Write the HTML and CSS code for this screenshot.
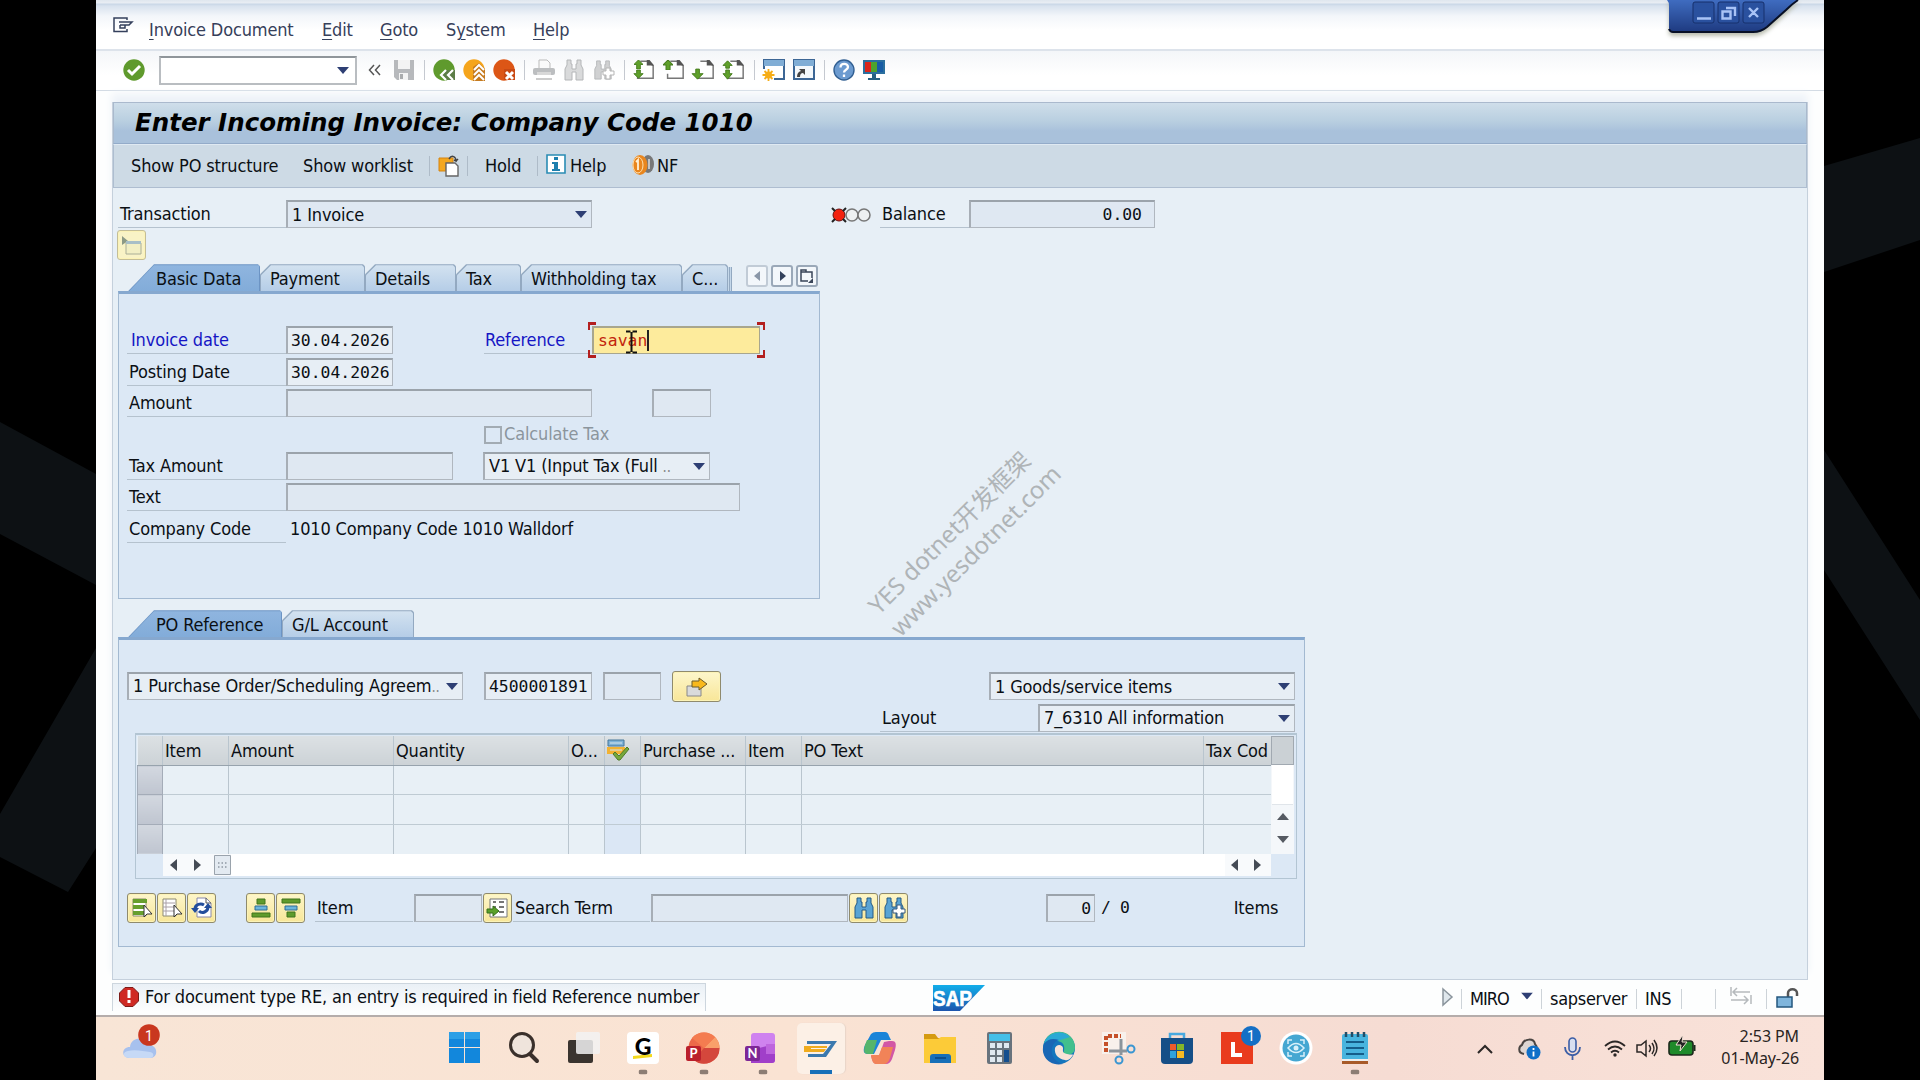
FILE: index.html
```html
<!DOCTYPE html>
<html lang="en">
<head>
<meta charset="utf-8">
<title>Enter Incoming Invoice: Company Code 1010</title>
<link rel="stylesheet" href="styles.css">
</head>
<body>
<svg class="defs" width="0" height="0" aria-hidden="true">
  <symbol id="binoculars" viewBox="0 0 22 22"><path d="M4 1h4v4h1v5h4V5h1V1h4v5l2 4v11h-7v-8H9v8H2V10l2-4z"/></symbol>
  <symbol id="page" viewBox="0 0 24 22"><path d="M8 1.500h9l5 5V20H5v-5" fill="#fff" stroke="#777" stroke-width="1.600"/><path d="M15 0h3l5 6h-8z" fill="#555"/></symbol>
  <symbol id="up" viewBox="0 0 10 10"><path d="M5 0l5 5H7v5H3V5H0z"/></symbol>
  <symbol id="caret" viewBox="0 0 12 7"><path d="M0 0h12L6 7z" fill="#2e3f74"/></symbol>
  <symbol id="dot" viewBox="0 0 9 5"><rect width="9" height="5" rx="2.500" fill="#8c7d74"/></symbol>
  <linearGradient id="sapblue" x2="0" y2="1"><stop stop-color="#12aeea"/><stop offset="1" stop-color="#1d55ad"/></linearGradient>
</svg>
<svg class="backdrop" viewBox="0 0 1920 1080" aria-hidden="true"><g fill="#0d1114"><path d="M0 422l96 52v111L0 534zM96 648L0 814v43l68 35 28-44z"/><path d="M1824 166l96-28v102l-96 32zM1824 450l96 150v120l-96-150z"/></g></svg>

<div class="window">
  <nav class="menubar">
    <svg class="menu-icon" width="21" height="16" viewBox="0 0 21 16"><path d="M14 12v2.500H1V1h13v2M6 5h13l-3 3h-4v3H7V8M7 8h8" fill="none" stroke="#34405c" stroke-width="1.500"/></svg>
    <span class="m-doc"><u>I</u>nvoice Document</span><span class="m-edit"><u>E</u>dit</span><span class="m-goto"><u>G</u>oto</span><span class="m-sys">S<u>y</u>stem</span><span><u>H</u>elp</span>
  </nav>
  <div class="toolbar">
    <svg class="ic ok" viewBox="0 0 22 22"><circle cx="11" cy="11" r="10.700" fill="#5f9a2d"/><path d="M5 11l4 4 8-8" fill="none" stroke="#fff" stroke-width="3"/></svg>
    <div class="command"><svg width="12" height="7"><use href="#caret"/></svg></div>
    <svg class="chev" width="14" height="12" viewBox="0 0 14 12"><path d="M6 1L1.500 6 6 11M12 1L7.500 6l4.500 5" fill="none" stroke="#555" stroke-width="1.500"/></svg>
    <svg class="ic" viewBox="0 0 22 22"><path d="M1 1h20v20H4l-3-3z" fill="#b7b9bc"/><path d="M5 1h12v9H5zM6 14h9v7H6z" fill="#f3f3f3"/><path d="M7 15h3v5H7z" fill="#a9abad"/></svg>
    <i class="sep"></i>
    <svg class="ic" viewBox="0 0 22 22"><circle cx="11" cy="11" r="10.700" fill="#5f9a2d"/><path d="M13 11h9v10h-9l-5-5z" fill="#5c7d46"/><path d="M13 11l-5 5 5 5M20 11l-5 5 5 5" fill="none" stroke="#fff" stroke-width="2.200"/></svg>
    <svg class="ic" viewBox="0 0 22 22"><circle cx="11" cy="11" r="10.700" fill="#f5a51c"/><path d="M10 8l6-4 6 6v12H10z" fill="#c57a1e"/><path d="M11 11l5-5 5 5M11 16l5-5 5 5M11 21l5-5 5 5" fill="none" stroke="#fff" stroke-width="2"/></svg>
    <svg class="ic" viewBox="0 0 22 22"><circle cx="11" cy="11" r="10.700" fill="#dc5616"/><path d="M11 10h11v11H11z" fill="#c94a14"/><path d="M13 13l7 7M20 13l-7 7" stroke="#fff" stroke-width="3"/></svg>
    <i class="sep"></i>
    <svg class="ic" viewBox="0 0 22 22"><path d="M6 10V1h8l3 3v6" fill="#fafafa" stroke="#bbb"/><rect y="9" width="22" height="7" rx="2" fill="#bcbec0"/><path d="M4 13h14v3H4z" fill="#d8d8d8"/><path d="M3 19h16v2H3z" fill="#ccc"/></svg>
    <svg class="ic" viewBox="0 0 22 22"><use href="#binoculars" width="22" height="22" fill="#d9dadb" stroke="#b4b6b8"/></svg>
    <svg class="ic" viewBox="0 0 22 22"><use href="#binoculars" width="20" height="22" fill="#d0d1d2" stroke="#b4b6b8"/><path d="M13 9h4v3h4v4h-4v4h-4v-4h-3v-4h3z" fill="#fff" stroke="#b5b5b5"/></svg>
    <i class="sep"></i>
    <svg class="ic" viewBox="0 0 24 22"><use href="#page" width="24" height="22"/><g fill="#5fa02a" stroke="#447b1d" stroke-width="1"><use href="#up" x="1" width="10" height="10"/><path d="M4 11h4v4h3l-5 5-5-5h3z"/></g></svg>
    <svg class="ic" viewBox="0 0 24 22"><use href="#page" width="24" height="22"/><g fill="#5fa02a" stroke="#447b1d" stroke-width="1"><use href="#up" width="11" height="11"/></g></svg>
    <svg class="ic" viewBox="0 0 24 22"><use href="#page" width="24" height="22"/><path d="M3 10h4v5h4l-6 6-6-6h4z" fill="#5fa02a" stroke="#447b1d"/></svg>
    <svg class="ic" viewBox="0 0 24 22"><use href="#page" width="24" height="22"/><g fill="#5fa02a" stroke="#447b1d" stroke-width="1"><path d="M5 1l5 5H7v3H3V6H0zM3 11h4v4h3l-5 6-5-6h3z"/></g></svg>
    <i class="sep"></i>
    <svg class="ic" viewBox="0 0 22 22"><path d="M1 1h20v19H1z" fill="#fff" stroke="#3c6695" stroke-width="2"/><path d="M1 1h20v6H1z" fill="#80add5"/><path d="M-1 10h12v11H-1z" fill="#fff"/><circle cx="5.500" cy="16" r="3.500" fill="#f6ad16"/><path d="M5.500 10v12M-.5 16h12M1.500 12l8 8M9.500 12l-8 8" stroke="#f6ad16" stroke-width="1.800"/></svg>
    <svg class="ic" viewBox="0 0 22 22"><path d="M1 1h20v19H1z" fill="#f4f8fb" stroke="#3c6695" stroke-width="2"/><path d="M1 1h20v6H1z" fill="#80add5"/><path d="M4 18q0-5 4-6l-2-2h6v6l-2-2q-3 0-3 4z" fill="#444"/></svg>
    <i class="sep"></i>
    <svg class="ic" viewBox="0 0 22 22"><circle cx="11" cy="11" r="10" fill="#6c9bd0" stroke="#315f92" stroke-width="1.400"/><path d="M7.500 8.500c0-5 7.500-4.500 7.500-.5 0 3-4 2.500-4 5.500M11 15.500v2.500" fill="none" stroke="#fff" stroke-width="2.300"/></svg>
    <svg class="ic" viewBox="0 0 22 22"><path d="M0 1h22v14H0z" fill="#2b6f9e"/><path d="M2 3h6v10H2z" fill="#d9251c"/><path d="M8 3h6v10H8z" fill="#4ea32c"/><path d="M14 3h6v10h-6z" fill="#185ca5"/><path d="M9 15h4v4h4v2H5v-2h4z" fill="#246083"/></svg>
  </div>

  <main class="screen">
    <h1>Enter Incoming Invoice: Company Code 1010</h1>
    <div class="appbar">
      <span class="a-po">Show PO structure</span><span class="a-work">Show worklist</span><i class="asep"></i>
      <svg class="a-paste" width="21" height="22" viewBox="0 0 21 22"><path d="M1 3h14v5H8v8H1z" fill="#f4a71f" stroke="#d58411"/><path d="M8 8h9l3 3v10H8z" fill="#fff" stroke="#666" stroke-width="1.400"/><path d="M11 4c3-5 7-2 7 2l-2-1m2 1l2-2" fill="none" stroke="#444" stroke-width="1.500"/></svg>
      <i class="asep"></i><span class="a-hold">Hold</span><i class="asep"></i>
      <svg class="a-info" width="20" height="20" viewBox="0 0 20 20"><path d="M1 1h18v18H1z" fill="#fff" stroke="#2a8cb4" stroke-width="1.600"/><path d="M8 3h4v3H8zM6 8h6v7h2v2H6v-2h2v-5H6z" fill="#1d7fae"/></svg>
      <span class="a-help">Help</span>
      <svg class="a-coins" width="22" height="22" viewBox="0 0 22 22"><ellipse cx="16" cy="10" rx="6" ry="9" fill="#777"/><path d="M17 5v10" stroke="#ddd" stroke-width="1.500"/><ellipse cx="8" cy="11" rx="7.500" ry="10" fill="#e9861e"/><ellipse cx="6" cy="11" rx="5" ry="8" fill="none" stroke="#ffe1b0"/><path d="M4 8l2-2v10" fill="none" stroke="#fff1d8" stroke-width="1.800"/></svg>
      <span>NF</span>
    </div>

    <div class="head-row">
      <span class="label lb-trans">Transaction</span>
      <div class="field select w-long"><span>1 Invoice</span><svg width="12" height="7"><use href="#caret"/></svg></div>
      <svg class="lights" width="39" height="16" viewBox="0 0 39 16"><circle cx="7" cy="8" r="6" fill="#f2210f" stroke="#611"/><path d="M0 1l3 3M14 1l-3 3M0 15l3-3M14 15l-3-3" stroke="#222" stroke-width="2"/><circle cx="20" cy="8" r="6" fill="#eef0f1" stroke="#777" stroke-width="1.500"/><circle cx="32" cy="8" r="6" fill="#eef0f1" stroke="#777" stroke-width="1.500"/></svg>
      <span class="label lb-bal">Balance</span>
      <div class="field mono balance">0.00</div>
    </div>
    <button class="ybtn off" aria-label="Open header"><svg width="20" height="20" viewBox="0 0 20 20"><path d="M0 1l6 5-6 4z" fill="#8d9a86"/><path d="M4 8h15v11H4z" fill="#f2efc4" stroke="#aaae97"/><path d="M4 6h15v3H4z" fill="#a8bfc7"/></svg></button>

    <section class="panel header-panel">
      <div class="tabs">
        <span class="tab active t-basic">Basic Data</span><span class="tab t-pay">Payment</span><span class="tab t-det">Details</span><span class="tab t-tax">Tax</span><span class="tab t-with">Withholding tax</span><span class="tab t-c">C...</span><i class="edge"></i><i class="edge"></i>
        <button class="tbtn dim first" aria-label="Previous tab"><svg width="10" height="12"><path d="M8 1v10L2 6z" fill="#8a97a8"/></svg></button>
        <button class="tbtn" aria-label="Next tab"><svg width="10" height="12"><path d="M3 1v10l6-5z" fill="#33415c"/></svg></button>
        <button class="tbtn" aria-label="Tab list"><svg width="14" height="15" viewBox="0 0 14 15"><path d="M8 12H1V3h11v6M1 3V1h5v2" fill="none" stroke="#3a4659" stroke-width="1.500"/><path d="M13 9v5H8z" fill="#3a4659"/></svg></button>
      </div>
      <div class="body">
        <div class="row"><span class="label req">Invoice date</span><div class="field mono live w-date">30.04.2026</div>
          <span class="label req lb-ref">Reference</span>
          <div class="focus"><i class="c tl"></i><i class="c tr"></i><i class="c bl"></i><i class="c br"></i><div class="field mono ref">savan<i class="cursor"></i></div>
            <svg class="ibeam" width="13" height="24" viewBox="0 0 13 24"><path d="M1 1.500h4.500M7.500 1.500H12M6.500 2v20M1 22.500h4.500M7.500 22.500H12" stroke="#111" stroke-width="2"/></svg></div></div>
        <div class="row"><span class="label">Posting Date</span><div class="field mono live w-date">30.04.2026</div></div>
        <div class="row"><span class="label">Amount</span><div class="field w-long"></div><div class="field w-cur"></div></div>
        <div class="row"><i class="checkbox"></i><span class="calc">Calculate Tax</span></div>
        <div class="row"><span class="label">Tax Amount</span><div class="field w-tax"></div><div class="field live select w-v1"><span>V1 V1 (Input Tax (Full <small>..</small></span><svg width="12" height="7"><use href="#caret"/></svg></div></div>
        <div class="row"><span class="label">Text</span><div class="field w-text"></div></div>
        <div class="row"><span class="label">Company Code</span><span class="plain">1010 Company Code 1010 Walldorf</span></div>
      </div>
    </section>

    <section class="panel items-panel">
      <div class="tabs">
        <span class="tab active t-po">PO Reference</span><span class="tab t-gl">G/L Account</span>
      </div>
      <div class="body">
        <div class="po-row"><div class="field live select w-po"><span>1 Purchase Order/Scheduling Agreem<small>..</small></span><svg width="12" height="7"><use href="#caret"/></svg></div>
          <div class="field mono live w-num">4500001891</div><div class="field w-pos"></div>
          <button class="ybtn wide" aria-label="Go"><svg width="22" height="20" viewBox="0 0 22 20"><path d="M1 9h14v10H1z" fill="#d9dadb" stroke="#888"/><path d="M6 4h7V1l8 6-8 6v-3H6z" fill="#f8b81c" stroke="#6b5a2b"/></svg></button>
          <div class="field live select w-goods"><span>1 Goods/service items</span><svg width="12" height="7"><use href="#caret"/></svg></div></div>
        <div class="layout-row"><span class="label lb-layout">Layout</span><div class="field live select w-layout"><span>7_6310 All information</span><svg width="12" height="7"><use href="#caret"/></svg></div></div>

        <div class="grid-frame">
          <table>
            <colgroup><col class="g0"><col class="g1"><col class="g2"><col class="g3"><col class="g4"><col class="g5"><col class="g6"><col class="g7"><col class="g8"><col class="g9"></colgroup>
            <thead><tr><th></th><th>Item</th><th>Amount</th><th>Quantity</th><th>O...</th><th><svg width="22" height="22" viewBox="0 0 22 22"><path d="M1 1h16v6H1z" fill="#7fb2d8" stroke="#45779c"/><path d="M0 8h18v7H0z" fill="#f2b233"/><path d="M3 4h12M3 11h12" stroke="#d7e6ef"/><path d="M8 13l4 4 8-9 2 2-9 11h-2l-5-6z" fill="#76a83c" stroke="#4f7a25"/></svg></th><th>Purchase ...</th><th>Item</th><th>PO Text</th><th>Tax Cod</th></tr></thead>
            <tbody><tr><td></td><td></td><td></td><td></td><td></td><td></td><td></td><td></td><td></td><td></td></tr><tr><td></td><td></td><td></td><td></td><td></td><td></td><td></td><td></td><td></td><td></td></tr><tr><td></td><td></td><td></td><td></td><td></td><td></td><td></td><td></td><td></td><td></td></tr></tbody>
          </table>
          <div class="vscroll"><i class="cfg"></i><i class="track"></i><svg class="arr" width="12" height="7"><path d="M0 7h12L6 0z" fill="#555a62"/></svg><svg class="arr" width="12" height="7"><path d="M0 0h12L6 7z" fill="#555a62"/></svg></div>
          <div class="hscroll"><svg width="7" height="12"><path d="M7 0v12L0 6z" fill="#454b55"/></svg><svg class="h2" width="7" height="12"><path d="M0 0v12l7-6z" fill="#454b55"/></svg><svg class="thumb" width="17" height="20" viewBox="0 0 17 20"><path d="M.5.500h16v19H.5z" fill="#e3eaf1" stroke="#9aa3ac"/><path d="M4 8h9M4 12h9" stroke="#8f98a3" stroke-width="1.500" stroke-dasharray="1.500 2"/></svg><i class="htrack"></i><svg class="h3" width="7" height="12"><path d="M7 0v12L0 6z" fill="#454b55"/></svg><svg class="h4" width="7" height="12"><path d="M0 0v12l7-6z" fill="#454b55"/></svg></div>
        </div>

        <div class="actions">
          <button class="ybtn" aria-label="Select all"><svg width="22" height="22" viewBox="0 0 22 22"><path d="M2 2h13v17H2z" fill="#fff" stroke="#8c8a70"/><path d="M2 2h14v4H2zM2 8h12v4H2zM2 14h12v4H2z" fill="#679f2e"/><path d="M13 8v12l3-3h5z" fill="#fff" stroke="#333"/></svg></button>
          <button class="ybtn" aria-label="Deselect all"><svg width="22" height="22" viewBox="0 0 22 22"><path d="M2 2h13v17H2z" fill="#fff" stroke="#8c8a70"/><path d="M2 6h12M2 10h12M2 14h12M5 2v17" stroke="#a9a0a8"/><path d="M13 8v12l3-3h5z" fill="#fff" stroke="#333"/></svg></button>
          <button class="ybtn" aria-label="Refresh"><svg width="22" height="22" viewBox="0 0 22 22"><path d="M6 1h9l5 5v14H6z" fill="#fff" stroke="#88a"/><path d="M15 1v5h5" fill="none" stroke="#555"/><path d="M4 12c0-5 6-6 9-4M17 10c0 5-6 7-9 4" fill="none" stroke="#234e9c" stroke-width="3"/><path d="M0 11h8l-4 5zM13 11h8l-4-5z" fill="#234e9c"/></svg></button>
          <button class="ybtn gap30" aria-label="First item"><svg width="20" height="20" viewBox="0 0 20 20"><path d="M6 1h8v5H6zM1 15h18v4H1z" fill="#5f9b2c" stroke="#41741d"/><path d="M4 8h12v4H4z" fill="#6bb5dd" stroke="#2f6c93"/></svg></button>
          <button class="ybtn" aria-label="Last item"><svg width="20" height="20" viewBox="0 0 20 20"><path d="M1 1h18v4H1zM6 14h8v5H6z" fill="#5f9b2c" stroke="#41741d"/><path d="M4 8h12v4H4z" fill="#6bb5dd" stroke="#2f6c93"/></svg></button>
          <span class="label lb-item">Item</span><div class="field w-item"></div>
          <button class="ybtn" aria-label="Position"><svg width="22" height="22" viewBox="0 0 22 22"><path d="M3 2h17v18H3z" fill="#fff" stroke="#777"/><path d="M6 5h3M12 5h5M12 10h5M12 15h5M6 10h3" stroke="#777" stroke-width="2"/><path d="M0 12h6V9l6 5-6 5v-3H0z" fill="#5ba02a" stroke="#36701b"/></svg></button>
          <span class="label lb-search">Search Term</span><div class="field w-search"></div>
          <button class="ybtn" aria-label="Find"><svg width="22" height="22"><use href="#binoculars" fill="#5aa4d4" stroke="#245a85"/></svg></button>
          <button class="ybtn" aria-label="Find next"><svg width="22" height="22"><use href="#binoculars" fill="#5aa4d4" stroke="#245a85"/><path d="M14 8h4v4h4v4h-4v4h-4v-4h-4v-4h4z" fill="#fff" stroke="#35597c"/></svg></button>
          <div class="field mono w-count">0</div><span class="mono slash">/</span><span class="mono total">0</span><span class="items-word">Items</span>
        </div>
      </div>
    </section>
  </main>

  <footer class="status">
    <div class="message"><svg width="20" height="20" viewBox="0 0 20 20"><path d="M6 .5h8L19.500 6v8L14 19.500H6L.5 14V6z" fill="#cf2a24" stroke="#7c1b18"/><path d="M8.500 3h3v8h-3zM8.500 13h3v3h-3z" fill="#fff"/></svg><span>For document type RE, an entry is required in field Reference number</span></div>
    <svg class="sap" width="52" height="26" viewBox="0 0 52 26"><path d="M0 0h52L27 26H0z" fill="url(#sapblue)"/><text x="0" y="20.500" textLength="39" lengthAdjust="spacingAndGlyphs">SAP</text></svg>
    <div class="session">
      <svg class="s-tri" width="12" height="18" viewBox="0 0 12 18"><path d="M1 1l9 8-9 8z" fill="#dfe7ec" stroke="#8a949c" stroke-width="1.500"/></svg><i></i><span class="s-tx">MIRO</span><svg class="s-caret" width="12" height="8" viewBox="0 0 12 7"><use href="#caret" width="12" height="7"/></svg><i></i><span class="s-srv">sapserver</span><i></i><span class="s-ins">INS</span><i></i><i class="s-gap"></i>
      <svg class="s-move" width="22" height="17" viewBox="0 0 22 17"><path d="M1 0v9M3 5h17M7 1L3 5l4 4M21 8v9M1 13h17M14 9l4 4-4 4" fill="none" stroke="#b6babd" stroke-width="1.500"/></svg><i></i>
      <svg class="s-lock" width="23" height="20" viewBox="0 0 23 20"><path d="M12 9V5c0-5 9-5 9 0v3" fill="none" stroke="#555" stroke-width="2.500"/><path d="M1 9h15v10H1z" fill="#7fb5dc" stroke="#24577e" stroke-width="1.500"/></svg>
    </div>
  </footer>

  <div class="taskbar">
    <svg class="tk weather" width="38" height="34" viewBox="0 0 38 34"><path d="M8 31c-9 0-9-11 0-11 1-11 17-11 19-2 9 0 10 13 1 13z" fill="#a7c1ee"/><path d="M8 31c-8 0-8-6-2-7 6-2 16 0 22 1 5 1 4 6 0 6z" fill="#c6d9f6"/><circle cx="27" cy="8" r="10.800" fill="#c9371f"/><text x="27" y="13.500">1</text></svg>
    <svg class="tk" viewBox="0 0 34 34"><path d="M1 1h15v15H1zM17 1h15v15H17zM1 17h15v15H1zM17 17h15v15H17z" fill="#1287dc"/><path d="M1 1h15v7H1zM17 1h15v7H17z" fill="#2c9fe6"/></svg>
    <svg class="tk" viewBox="0 0 34 34"><circle cx="15" cy="14" r="11.500" fill="#efe4dc" stroke="#3a302b" stroke-width="3"/><path d="M23 23l7 7" stroke="#3a302b" stroke-width="4" stroke-linecap="round"/></svg>
    <svg class="tk" viewBox="0 0 34 34"><rect x="1" y="9" width="25" height="23" rx="2" fill="#3a342f"/><rect x="9" y="1" width="24" height="22" rx="2" fill="#f2f2f2" opacity=".85"/></svg>
    <svg class="tk run" viewBox="0 0 34 44"><rect x="1" y="1" width="32" height="32" rx="4" fill="#fff"/><path d="M7 25l19-2v3L7 28z" fill="#f3d91c"/><text class="g" x="17" y="24">G</text><use href="#dot" x="12.500" y="38.500" width="9" height="5"/></svg>
    <svg class="tk run" viewBox="0 0 34 44"><circle cx="18" cy="17" r="15.500" fill="#ec6a49"/><path d="M18 17L29 6a15.500 15.500 0 0 1 4.500 11z" fill="#f9a06a"/><path d="M18 1.500A15.500 15.500 0 0 0 6 7l12 10 11-11A15 15 0 0 0 18 1.500z" fill="#f47c50"/><path d="M18 17h15.500A15.500 15.500 0 0 1 8 29z" fill="#d4473c"/><rect y="15" width="15" height="15" rx="2" fill="#ba1f2b"/><text class="w" x="7.500" y="27">P</text><use href="#dot" x="13.500" y="38.500" width="9" height="5"/></svg>
    <svg class="tk run" viewBox="0 0 34 44"><rect x="6" y="2" width="24" height="30" rx="3" fill="#cf82ef"/><path d="M6 19l24-6v16q0 3-3 3H6z" fill="#a03fc9"/><path d="M21 13h9v10H21z" fill="#be65de"/><rect y="15" width="15" height="15" rx="2" fill="#7d2796"/><text class="w" x="7.500" y="27">N</text><use href="#dot" x="13.500" y="38.500" width="9" height="5"/></svg>
    <div class="active-app"><svg width="34" height="18" viewBox="0 0 34 18"><path d="M3 1h30l-11 16H4v-3h15l8-10H3z" fill="#3b79ae"/><path d="M0 6h23v2H7v1h15l-2 3H0z" fill="#f0ac1e"/></svg></div>
    <svg class="tk" viewBox="0 0 34 34"><path d="M8 3q2-2 5-2h9q3 0 4 4l2 4H18L11 23H5C0 23 0 19 2 14z" fill="#1b84d8"/><path d="M4 9h10l-4 14H5c-5 0-4-4-3-9z" fill="#55b56b"/><path d="M26 10h3c5 0 4 5 3 9l-3 9q-2 5-6 5h-9q-4 0-5-5l-1-3h8l5-14z" fill="#d257a5"/><path d="M8 24h8l3-8h11l-3 11q-2 6-6 6h-8q-4 0-5-9z" fill="#f18358"/></svg>
    <svg class="tk" viewBox="0 0 34 34"><path d="M1 3h11l3 4h18v8H1z" fill="#d59a11"/><path d="M1 8h14l3-2h15v26H1z" fill="#fccb38"/><path d="M7 32v-6q0-3 3-3h15q3 0 3 3v6z" fill="#176fb8"/><path d="M12 26h11v2H12z" fill="#0c4f8d"/></svg>
    <svg class="tk" viewBox="0 0 34 34"><rect x="5" y="1" width="25" height="32" rx="2" fill="#68737d"/><path d="M7 3h21v7H7z" fill="#45bfe8"/><path d="M8 12h5v5H8zM15 12h5v5h-5zM22 12h5v5h-5zM8 19h5v5H8zM15 19h5v5h-5zM8 26h5v5H8zM15 26h5v5h-5z" fill="#dfe8f0"/><path d="M22 19h5v12h-5z" fill="#134e8f"/></svg>
    <svg class="tk" viewBox="0 0 34 34"><circle cx="17" cy="17" r="16" fill="#1476bd"/><path d="M2 12C7-5 33-2 33 17q-1 9-12 6 4-11-5-13Q8 8 2 12z" fill="#42bf8d"/><path d="M2 12C6 1 20-2 28 6L15 10Q7 7 2 12z" fill="#2ba9d5"/><path d="M13 17c2-5 8-3 8 0 0 3-1 5 4 6 4 1 6 0 6 1-3 5-7 6-8 5-7-1-11-6-10-12z" fill="#f7e3d8"/><path d="M11 14c-4 8 1 17 10 19C5 36-2 22 2 13q5-7 15-4-4 1-6 5z" fill="#1967b5"/></svg>
    <svg class="tk" viewBox="0 0 34 34"><path d="M1 1h24v22H1z" fill="#f8f1ec"/><path d="M5 21V5h15" fill="none" stroke="#c5512a" stroke-width="4" stroke-dasharray="4 2"/><path d="M20 8v16M8 20h18" stroke="#8b949b" stroke-width="3"/><circle cx="18" cy="29" r="3.500" fill="none" stroke="#3a96d2" stroke-width="2"/><circle cx="30" cy="18" r="3.500" fill="none" stroke="#3a96d2" stroke-width="2"/></svg>
    <svg class="tk" viewBox="0 0 34 34"><path d="M10 8V3h14v5" fill="none" stroke="#48a9df" stroke-width="2.500"/><path d="M1 7h32v22q0 4-4 4H5q-4 0-4-4z" fill="#164f87"/><path d="M10 13h6v6h-6z" fill="#ef5b2b"/><path d="M17 13h7v6h-7z" fill="#84b729"/><path d="M10 20h6v7h-6z" fill="#30a2dc"/><path d="M17 20h7v7h-7z" fill="#f8b922"/></svg>
    <svg class="tk" viewBox="0 0 34 34"><path d="M1 1h32v32H1z" fill="#e93b1d"/><path d="M13 11v13h9" fill="none" stroke="#fff" stroke-width="4"/></svg>
    <svg class="tk" viewBox="0 0 34 34"><circle cx="17" cy="17" r="16.500" fill="#fff"/><circle cx="17" cy="17" r="13.500" fill="#45a7d2"/><path d="M9 17q8-9 16 0-8 9-16 0zM9 13V9h4M21 9h4v4M9 21v4h4M21 25h4v-4" fill="none" stroke="#d8f0fa" stroke-width="1.500"/><circle cx="17" cy="17" r="2.500" fill="#d8f0fa"/></svg>
    <svg class="tk run" viewBox="0 0 34 44"><rect x="4" y="3" width="26" height="30" rx="2" fill="#49b4de"/><path d="M4 30h26v3H4z" fill="#a85a28"/><path d="M4 28h26v2H4z" fill="#eee"/><path d="M8 11h18M8 17h18M8 23h18" stroke="#155d89" stroke-width="1.800"/><path d="M8 1v5M14 1v5M20 1v5M26 1v5" stroke="#234c66" stroke-width="2.500"/><use href="#dot" x="12.500" y="38.500" width="9" height="5"/></svg>
    <b class="badge">1</b>
    <div class="tray">
      <svg class="y-up" width="16" height="10" viewBox="0 0 16 10"><path d="M1 9l7-7 7 7" fill="none" stroke="#2b2726" stroke-width="2"/></svg>
      <svg class="y-cloud" width="23" height="22" viewBox="0 0 23 22"><path d="M6 16C-1 15 1 8 4 7 6 0 16 0 17 6l2 3" fill="#ddd6d3" stroke="#4a4543" stroke-width="2"/><circle cx="15.500" cy="14.500" r="7" fill="#0f6fc8"/><path d="M15.500 10v2M15.500 13.500v5" stroke="#fff" stroke-width="1.800"/></svg>
      <svg class="y-mic" width="17" height="24" viewBox="0 0 17 24"><rect x="5" y="1" width="7" height="14" rx="3.500" fill="#d8dff0" stroke="#3c5ea6" stroke-width="1.600"/><path d="M1 10c0 11 15 11 15 0M8.500 18v5" fill="none" stroke="#3c5ea6" stroke-width="1.800"/></svg>
      <svg class="y-wifi" width="22" height="17" viewBox="0 0 22 17"><path d="M1 6q10-9 20 0M4 9.500q7-6 14 0M7 12.500q4-3.500 8 0" fill="none" stroke="#2b2726" stroke-width="1.800"/><circle cx="11" cy="15" r="1.700" fill="#2b2726"/></svg>
      <svg class="y-vol" width="22" height="19" viewBox="0 0 22 19"><path d="M1 6h4l5-4v15l-5-4H1zM13 6q3 3.500 0 7M16 4q4 5.500 0 11M18 1q6 8 0 16" fill="none" stroke="#2b2726" stroke-width="1.500"/></svg>
      <svg class="y-bat" width="28" height="20" viewBox="0 0 28 20"><rect x="1" y="5" width="24" height="14" rx="3" fill="#1f8a2a" stroke="#1c2a1c" stroke-width="1.600"/><path d="M26.500 9v6" stroke="#1c2a1c" stroke-width="2"/><path d="M14 0L8 9h5l-1 6 7-9h-5l1-6z" fill="#222" stroke="#f4e0d6"/></svg>
      <div class="clock">2:53 PM<br>01-May-26</div>
    </div>
  </div>

  <div class="rdp-bar"><svg width="136" height="36" viewBox="0 0 136 36"><defs><linearGradient id="rdp" x2="0" y2="1"><stop stop-color="#3f6cc0"/><stop offset="1" stop-color="#1e3a80"/></linearGradient></defs><path d="M0 0h131q-6 4-12 10L100 27q-6 5-14 5H6q-4 0-4-4V6q0-4-2-6z" fill="url(#rdp)"/><path d="M131 0q-6 4-12 10L100 27q-6 5-14 5H6q-3 0-4-3" fill="none" stroke="#081026" stroke-width="2"/><g fill="#2a519f" stroke="#16306c"><rect x="26" y="2" width="21" height="21" rx="2"/><rect x="51" y="2" width="21" height="21" rx="2"/><rect x="76" y="2" width="21" height="21" rx="2"/></g><path d="M30 18.500h14M55.500 11.500h8v7h-8zM59 8h9v8M82 8l9 9M91 8l-9 9" fill="none" stroke="#a9c3f6" stroke-width="2.400"/></svg></div>
  <div class="watermark"><span>YES dotnet开发框架</span><span>www.yesdotnet.com</span></div>
</div>
</body>
</html>
```
FILE: styles.css
```css
* { box-sizing: border-box; }
body {
  margin: 0; width: 1920px; height: 1080px; overflow: hidden; background: #000; color: #0b0f14;
  font: 18px/28px "DejaVu Sans Condensed", "DejaVu Sans", sans-serif; font-stretch: condensed; letter-spacing: -0.15px; white-space: nowrap;
}
svg { display: block; flex: none; overflow: visible; }
span, i, button, .field { flex: none; }
i { font-style: normal; display: block; }
button { padding: 0; }
.defs { position: absolute; }
.backdrop { position: absolute; left: 0; top: 0; width: 1920px; height: 1080px; }

.window { position: relative; width: 1728px; height: 1080px; margin-left: 96px; background: #fdfefe; display: flex; flex-direction: column; }

.menubar {
  height: 51px; padding: 11px 0 0 17px; border-bottom: 2px solid #dde3eb; display: flex; align-items: center; color: #36405a;
  background: linear-gradient(#dfe6ee 0, #e9eef4 3px, #c8d6e6 4px, #d8e2ee 6px, #f3f6fa 16px, #fff 30px);
}
.menubar u { text-decoration-thickness: 1px; text-underline-offset: 3px; }
.menu-icon { margin: -9px 15px 0 0; }
.m-doc { width: 173px; }
.m-edit { width: 58px; }
.m-goto { width: 66px; }
.m-sys { width: 87px; }

.toolbar { height: 41px; border-bottom: 1px solid #d3dbe4; padding-left: 27px; display: flex; align-items: center; background: linear-gradient(#f4f6f9, #fff 24px); }
.ic { width: 22px; height: 22px; margin-right: 8px; }
.ok { margin-right: 14px; }
.command { width: 198px; height: 29px; border: 2px solid #b9bdc1; border-top-color: #8f959a; background: #fff; display: flex; align-items: center; justify-content: flex-end; padding-right: 6px; }
.chev { margin: 0 11px 0 11px; }
.sep { width: 1px; height: 20px; background: #c5c9d0; margin: 0 8px 0 1px; }

.screen { width: 1696px; height: 886px; margin: 11px 0 0 16px; border: 1px solid #c5d0dc; border-top: 0; background: #e7eff6; box-shadow: 0 -8px 8px #edf2f8; display: flex; flex-direction: column; align-items: flex-start; }
h1 { margin: 0; width: 1694px; height: 42px; border: 1px solid #aab9cd; border-bottom-color: #93abc9; padding-left: 21px; font: italic bold 24.500px/40px "DejaVu Sans", sans-serif; font-stretch: normal; letter-spacing: 0; color: #000; background: linear-gradient(#cfdeea, #b9cfe0 45%, #a9c1db 70%, #a9c1db); }
.appbar { width: 1694px; height: 44px; border: 1px solid #aebdd0; border-top-color: #dfe9f2; padding: 0 0 1px 17px; display: flex; align-items: center; background: #cddae5; }
.a-po { width: 172px; }
.a-work { width: 126px; }
.asep { width: 1px; height: 20px; background: #aebbc8; }
.a-paste { margin: 0 8px; }
.a-hold { width: 69px; padding-left: 17px; }
.a-info { margin: -3px 4px 0 8px; }
.a-help { width: 62px; }
.a-coins { margin: -2px 3px 0 0; }

.label { height: 28px; border-bottom: 1px solid #b5c2ce; width: 159px; padding-left: 2px; line-height: 28px; }
.field { height: 28px; border: 1px solid #b0b7bf; border-top: 2px solid #9ba3ab; border-left: 2px solid #a7aeb6; background: #dfe8f2; line-height: 26px; padding: 0 4px; }
.live { background: #e7eef5; }
.mono { font-family: "DejaVu Sans Mono", monospace; font-size: 16.400px; letter-spacing: 0; }
.select { display: flex; align-items: center; justify-content: space-between; }
.select small { color: #888; }
.w-long { width: 306px; }

.head-row { display: flex; margin: 12px 0 0 5px; }
.lb-trans { width: 168px; }
.lights { margin: 7px 9px 0 240px; }
.lb-bal { width: 89px; }
.balance { width: 186px; text-align: right; padding-right: 12px; }

.ybtn { width: 29px; height: 30px; border: 1px solid #8f8a6d; border-radius: 3px; background: linear-gradient(#fdf6cb, #f8e698); display: flex; align-items: center; justify-content: center; box-shadow: inset 0 0 0 1px #fcf3b6; }
.ybtn.off { margin: 2px 0 4px 4px; border-color: #c3bd98; background: #f9f3c6; }
.ybtn.wide { width: 49px; height: 31px; margin: -1px 268px 0 11px; }

.panel { margin-left: 5px; }
.tabs { display: flex; height: 27px; }
.tab { position: relative; z-index: 0; height: 27px; line-height: 29px; }
.tab::before, .tab::after { content: ""; position: absolute; z-index: -2; inset: 0; background: #93a9c1; clip-path: polygon(0 10px, 10px 0, calc(100% - 2px) 0, 100% 2px, 100% 100%, 0 100%); }
.tab::after { z-index: -1; inset: 1px 1px 0 1px; background: linear-gradient(#d3e2f0, #b5cde7); }
.tab.active { margin-left: 10px; padding-left: 28px; }
.tab.active::before { background: #6c94c4; clip-path: polygon(0 100%, 26px 0, calc(100% - 2px) 0, 100% 2px, 100% 100%); }
.tab.active::after { background: linear-gradient(#8fb5df, #82acd9); clip-path: polygon(0 100%, 25px 0, 100% 0, 100% 100%); }
.tab:not(.active) { padding-left: 10px; }
.t-basic { width: 132px; }
.t-pay { width: 105px; }
.t-det { width: 91px; }
.t-tax { width: 65px; }
.t-with { width: 161px; }
.t-c { width: 46px; }
.t-po { width: 154px; }
.t-gl { width: 132px; }
.edge { width: 2px; height: 24px; margin-top: 3px; background: #c5d8ea; border-right: 1px solid #93a9c1; }
.tbtn { width: 22px; height: 22px; margin: 1px 3px 0 0; border: 2px solid #9aa8b8; border-radius: 3px; background: #f3f7fb; display: flex; align-items: center; justify-content: center; }
.tbtn.first { margin-left: 14px; }
.tbtn.dim { border-color: #c1cbd6; }
.body { border: 1px solid #a3b9d1; border-top: 3px solid #86a8cf; background: #dce8f5; }
.header-panel .body { width: 702px; height: 308px; padding: 32px 0 0 8px; }

.row { display: flex; height: 31.400px; }
.req { color: #1515c4; padding-left: 4px; }
.w-date { width: 107px; padding-left: 3px; }
.lb-ref { width: 105px; margin-left: 91px; padding-left: 1px; }
.focus { position: relative; margin-left: 3px; }
.ref { width: 168px; color: #c2250c; background: #fdeb9c; border-color: #a8a68e; display: flex; align-items: center; }
.cursor { width: 2px; height: 21px; background: #222; }
.c { position: absolute; width: 8px; height: 8px; border: 0 solid #b31f1f; }
.tl { left: -4px; top: -4px; border-width: 3px 0 0 2px; }
.tr { right: -5px; top: -4px; border-width: 3px 2px 0 0; }
.bl { left: -4px; bottom: 0; border-width: 0 0 3px 2px; }
.br { right: -5px; bottom: 0; border-width: 0 2px 3px 0; }
.ibeam { position: absolute; left: 33px; top: 4px; }
.w-cur { width: 59px; margin-left: 60px; }
.checkbox { width: 18px; height: 18px; margin: 6px 2px 0 357px; border: 2px solid #a2abb3; }
.calc { color: #8b959d; }
.w-tax { width: 167px; }
.w-v1 { width: 227px; margin-left: 30px; padding-left: 4px; }
.w-text { width: 454px; }
.plain { padding-left: 4px; line-height: 28px; }

.items-panel { margin-top: 11px; }
.items-panel .body { width: 1187px; height: 310px; padding: 32px 0 0 8px; }
.po-row { display: flex; height: 31.400px; }
.w-po { width: 336px; }
.w-num { width: 108px; margin: 0 11px 0 21px; padding-left: 3px; }
.w-pos { width: 58px; }
.w-goods { width: 306px; }
.layout-row { display: flex; margin-left: 753px; }
.lb-layout { width: 158px; }
.w-layout { width: 257px; }

.grid-frame { width: 1162px; height: 146px; margin: 1px 0 0 8px; border: 2px solid #b3c5d3; border-width: 2px 1px 1px; padding: 1px 0 0 1px; display: grid; grid-template-columns: 1134px 24px; grid-template-rows: 118px 22px; }
table { border-collapse: collapse; table-layout: fixed; width: 1134px; height: 118px; background: #e8f0f6; }
.g0 { width: 25px; } .g1 { width: 66px; } .g2 { width: 165px; } .g3 { width: 175px; } .g4 { width: 36px; } .g5 { width: 36px; } .g6 { width: 105px; } .g7 { width: 56px; } .g8 { width: 402px; } .g9 { width: 68px; }
th, td { padding: 0 0 0 2px; border-right: 1px solid #b9c5ce; border-bottom: 1px solid #bfcbd3; text-align: left; font-weight: normal; overflow: hidden; }
th { height: 30px; line-height: 29px; border-bottom-color: #97a3ad; background: linear-gradient(#dce1e4, #ccd2d6); }
th:last-child, td:last-child { border-right: 0; }
td { height: 29px; }
tbody tr:last-child td { border-bottom: 0; }
td:first-child { background: linear-gradient(#d3d8e0, #bfc5d0); border: 1px solid #a4acb8; }
td:nth-child(6) { background: #dbe7f5; }
.vscroll { display: flex; flex-direction: column; align-items: center; background: #f4f7fa; width: 23px; }
.cfg { width: 23px; height: 29px; border: 1px solid #a1a9b1; background: #cbd1d5; }
.track { width: 21px; height: 40px; background: #fff; border-bottom: 1px solid #e0e5ea; }
.vscroll .arr { margin: 8px 0; }
.hscroll { grid-column: 1 / -1; margin-left: 26px; width: 1108px; background: #f8fafc; display: flex; align-items: center; padding-left: 7px; }
.h2 { margin: 0 13px 0 17px; }
.htrack { width: 994px; height: 22px; background: #fff; }
.h3 { margin-left: 6px; }
.h4 { margin-left: 16px; }

.actions { display: flex; align-items: center; margin-top: 14px; gap: 1px; height: 30px; }
.actions .gap30 { margin-left: 29px; }
.lb-item { width: 98px; margin-left: 9px; }
.w-item { width: 68px; }
.lb-search { width: 137px; }
.w-search { width: 197px; }
.w-count { width: 49px; margin-left: 137px; text-align: right; padding-right: 3px; }
.slash { margin-left: 5px; }
.total { margin-left: 8px; }
.items-word { margin-left: 103px; }

.status { height: 38px; padding: 3px 0 0 16px; display: flex; border-bottom: 2px solid #b5adab; }
.message { width: 594px; height: 28px; border: 1px solid #cdd6de; border-bottom: 0; background: linear-gradient(#eaf0f6, #fdfefe); display: flex; align-items: center; padding-left: 6px; gap: 6px; }
.sap { margin: 2px 0 0 227px; }
.sap text { font: bold 22px "Liberation Sans", sans-serif; fill: #fff; stroke: #fff; stroke-width: .6px; letter-spacing: 0; }
.session { display: flex; align-items: center; margin-left: 457px; height: 32px; letter-spacing: -0.3px; }
.session i { width: 1px; height: 20px; background: #cdd3d8; }
.s-tri { margin: -3px 7px 0 0; }
.s-tx { margin-left: 8px; width: 51px; letter-spacing: -1px; }
.s-caret { margin: -6px 8px 0 0; }
.s-srv { margin-left: 8px; width: 86px; }
.s-ins { margin-left: 8px; width: 36px; }
.session .s-gap { margin-left: 33px; }
.s-move { margin: -6px 14px 0 14px; }
.s-lock { margin: -2px 0 0 9px; }

.taskbar { position: relative; height: 63px; padding: 14px 0 0 352px; display: flex; background: linear-gradient(90deg, #f8e5d6, #fae3d3 40%, #f6dcd3 75%, #f9e2d9); }
.tk { width: 34px; height: 34px; margin-right: 25.400px; }
.tk.run { height: 44px; }
.tk.weather { position: absolute; left: 26px; top: 10px; width: 38px; height: 34px; margin: 0; }
.weather text, .badge { font: 14px/20px Roboto, sans-serif; letter-spacing: 0; fill: #fff; text-anchor: middle; }
.g { font: 900 23px Lato, sans-serif; text-anchor: middle; letter-spacing: 0; }
.w { font: bold 13px Lato, sans-serif; fill: #fff; text-anchor: middle; letter-spacing: 0; }
.active-app { width: 48px; height: 51px; margin: -8px 18px 0 -7px; border-radius: 5px; background: #fcf0e6 linear-gradient(#176fb8, #176fb8) 50% 100% / 22px 4px no-repeat; display: flex; align-items: center; justify-content: center; box-shadow: 1px 0 1px #e8d5c8; }
.badge { position: absolute; left: 1145px; top: 9px; width: 20px; height: 20px; border-radius: 50%; background: #146fc5; color: #fff; text-align: center; }
.tray { position: absolute; left: 1381px; top: 0; height: 63px; display: flex; align-items: center; }
.y-cloud { margin: 0 23px 0 25px; }
.y-wifi { margin: 0 10px 0 23px; }
.y-bat { margin: 0 22px 6px 10px; }
.clock { width: 81px; margin-top: -2px; text-align: right; font: 16px/21.500px "Noto Sans", sans-serif; letter-spacing: -0.1px; color: #2a2422; }

.rdp-bar { position: absolute; left: 1571px; top: 0; filter: drop-shadow(0 3px 2px #b9bcae); }
.watermark { position: absolute; left: 753px; top: 507px; width: 232px; font: 24px/31px "Noto Sans", "Noto Sans CJK SC", sans-serif; letter-spacing: 0; color: #afb4b7; display: flex; flex-direction: column; align-items: flex-start; transform: rotate(-45deg); }
```
